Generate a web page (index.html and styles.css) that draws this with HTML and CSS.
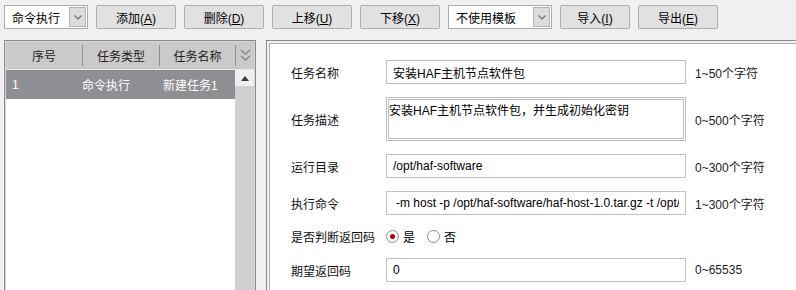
FILE: index.html
```html
<!DOCTYPE html>
<html lang="zh-CN">
<head>
    <meta charset="UTF-8">
    <title>任务编辑</title>
    <link rel="stylesheet" href="styles.css">
</head>
<body>
    <div class="toolbar">
        <div class="combo combo-type">
            <span class="combo-text">命令执行</span>
            <span class="combo-arrow"><svg width="8" height="5" viewBox="0 0 8 5"><path d="M0.5 0.5 L4 4 L7.5 0.5" fill="none" stroke="#707070" stroke-width="1.2"/></svg></span>
        </div>
        <button class="btn">添加(<u>A</u>)</button>
        <button class="btn">删除(<u>D</u>)</button>
        <button class="btn">上移(<u>U</u>)</button>
        <button class="btn">下移(<u>X</u>)</button>
        <div class="combo combo-template">
            <span class="combo-text">不使用模板</span>
            <span class="combo-arrow"><svg width="8" height="5" viewBox="0 0 8 5"><path d="M0.5 0.5 L4 4 L7.5 0.5" fill="none" stroke="#707070" stroke-width="1.2"/></svg></span>
        </div>
        <button class="btn btn-import">导入(<u>I</u>)</button>
        <button class="btn">导出(<u>E</u>)</button>
    </div>

    <div class="main">
        <div class="list-panel">
            <div class="list-head">
                <div class="head-col col-no">序号</div>
                <div class="head-col col-type">任务类型</div>
                <div class="head-col col-name">任务名称</div>
                <div class="head-icon">
                    <svg width="11" height="14" viewBox="0 0 11 14">
                        <path d="M1 1 L5.5 5 L10 1" fill="none" stroke="#8a8a8a" stroke-width="1.6"/>
                        <path d="M1 7 L5.5 11 L10 7" fill="none" stroke="#8a8a8a" stroke-width="1.6"/>
                    </svg>
                </div>
            </div>
            <div class="list-body">
                <div class="rows">
                    <div class="row selected">
                        <span class="cell-no">1</span>
                        <span class="cell-type">命令执行</span>
                        <span class="cell-name">新建任务1</span>
                    </div>
                </div>
                <div class="scrollbar">
                    <div class="scroll-up">
                        <svg width="8" height="5" viewBox="0 0 8 5"><polygon points="0,5 4,0 8,5" fill="#3a3a3a"/></svg>
                    </div>
                </div>
            </div>
        </div>

        <div class="form-panel">
            <div class="form-inner">
                <div class="form-grid">
                    <label class="label">任务名称</label>
                    <input class="field" type="text" value="安装HAF主机节点软件包">
                    <span class="hint">1~50个字符</span>

                    <label class="label">任务描述</label>
                    <textarea class="field area">安装HAF主机节点软件包，并生成初始化密钥</textarea>
                    <span class="hint">0~500个字符</span>

                    <label class="label">运行目录</label>
                    <input class="field" type="text" value="/opt/haf-software">
                    <span class="hint">0~300个字符</span>

                    <label class="label">执行命令</label>
                    <input class="field field-cmd" type="text" value="-m host -p /opt/haf-software/haf-host-1.0.tar.gz -t /opt/haf">
                    <span class="hint">1~300个字符</span>

                    <label class="label">是否判断返回码</label>
                    <div class="radios">
                        <span class="radio checked"></span><span class="radio-label">是</span>
                        <span class="radio"></span><span class="radio-label">否</span>
                    </div>
                    <span class="hint"></span>

                    <label class="label">期望返回码</label>
                    <input class="field" type="text" value="0">
                    <span class="hint">0~65535</span>
                </div>
            </div>
        </div>
    </div>
</body>
</html>
```

FILE: styles.css
```css
html, body {
    margin: 0;
    padding: 0;
    height: 290px;
    overflow: hidden;
}
body {
    background-color: #f0f0f0;
    font-family: "Liberation Sans", "Noto Sans CJK SC", sans-serif;
    font-size: 12px;
    color: #000;
}
.toolbar {
    display: flex;
    gap: 8px;
    height: 24px;
    padding: 5px 4px 11px;
}
.combo {
    box-sizing: border-box;
    height: 24px;
    display: flex;
    align-items: center;
    justify-content: space-between;
    background: #fff;
    border: 1px solid #adadad;
}
.combo-type {
    width: 84px;
}
.combo-template {
    width: 104px;
}
.combo-text {
    padding-left: 7px;
}
.combo-arrow {
    box-sizing: border-box;
    width: 17px;
    height: 20px;
    margin-right: 1px;
    display: flex;
    align-items: center;
    justify-content: center;
    background: #dcdcdc;
    border: 1px solid #b5b5b5;
}
.btn {
    box-sizing: border-box;
    width: 80px;
    height: 24px;
    padding: 0;
    font: inherit;
    color: #000;
    background: #e1e1e1;
    border: 1px solid #adadad;
    border-radius: 2px;
}
.btn-import {
    width: 70px;
}
.main {
    display: flex;
    gap: 10px;
    padding-left: 4px;
    height: 260px;
}
.list-panel {
    box-sizing: border-box;
    width: 252px;
    flex-shrink: 0;
    border: 1px solid #8a8a8a;
    padding: 1px;
    background: #d6d6d6;
    display: flex;
    flex-direction: column;
}
.list-head {
    display: flex;
    height: 21px;
    padding: 3px 0;
    background: #cacaca;
    border-bottom: 1px solid #e8e8e8;
    color: #222;
}
.head-col {
    display: flex;
    align-items: center;
    justify-content: center;
    border-right: 1px solid #8f8f8f;
}
.col-no {
    width: 76px;
}
.col-type {
    width: 76px;
}
.col-name {
    width: 75px;
}
.head-icon {
    flex: 1;
    display: flex;
    align-items: center;
    justify-content: center;
}
.list-body {
    flex: 1;
    display: flex;
}
.rows {
    width: 229px;
    background: #fff;
}
.row {
    display: flex;
    height: 29px;
    align-items: center;
}
.row.selected {
    background: #8e8f93;
    color: #fff;
}
.cell-no {
    width: 70px;
    padding-left: 6px;
}
.cell-type {
    width: 81px;
}
.scrollbar {
    flex: 1;
    background: #d0d0d0;
}
.scroll-up {
    height: 16px;
    background: #f0f0f0;
    display: flex;
    align-items: center;
    justify-content: center;
}
.form-panel {
    width: 560px;
    flex-shrink: 0;
    border: 1px solid #8a8a8a;
    padding: 2px 0 0 2px;
    background: #f0f0f0;
}
.form-inner {
    height: 100%;
    border-left: 1px solid #b0b0b0;
    border-top: 1px solid #b0b0b0;
    background: #fff;
    padding: 16px 0 0 21px;
}
.form-grid {
    display: grid;
    grid-template-columns: 86px 300px auto;
    column-gap: 9px;
    row-gap: 13px;
    align-items: center;
}
.label {
    color: #111;
}
.field {
    box-sizing: border-box;
    width: 300px;
    height: 24px;
    margin: 0;
    padding: 0 6px;
    font: inherit;
    color: #000;
    background: #fff;
    border: 1px solid #c2c2c2;
    outline: none;
}
.field-cmd {
    padding-left: 9px;
}
.area {
    height: 44px;
    padding: 3px 0 0;
    border: 3px double #bdbdbd;
    resize: none;
    overflow: hidden;
    line-height: 16px;
}
.hint {
    color: #222;
}
.radios {
    display: flex;
    align-items: center;
    height: 17px;
}
.radio {
    box-sizing: border-box;
    width: 13px;
    height: 13px;
    border: 1px solid #8c8c8c;
    border-radius: 50%;
    background: #fff;
    display: flex;
    align-items: center;
    justify-content: center;
}
.radio.checked::after {
    content: "";
    width: 5px;
    height: 5px;
    border-radius: 50%;
    background: #b00000;
}
.radio-label {
    margin: 0 12px 0 4px;
}
```
